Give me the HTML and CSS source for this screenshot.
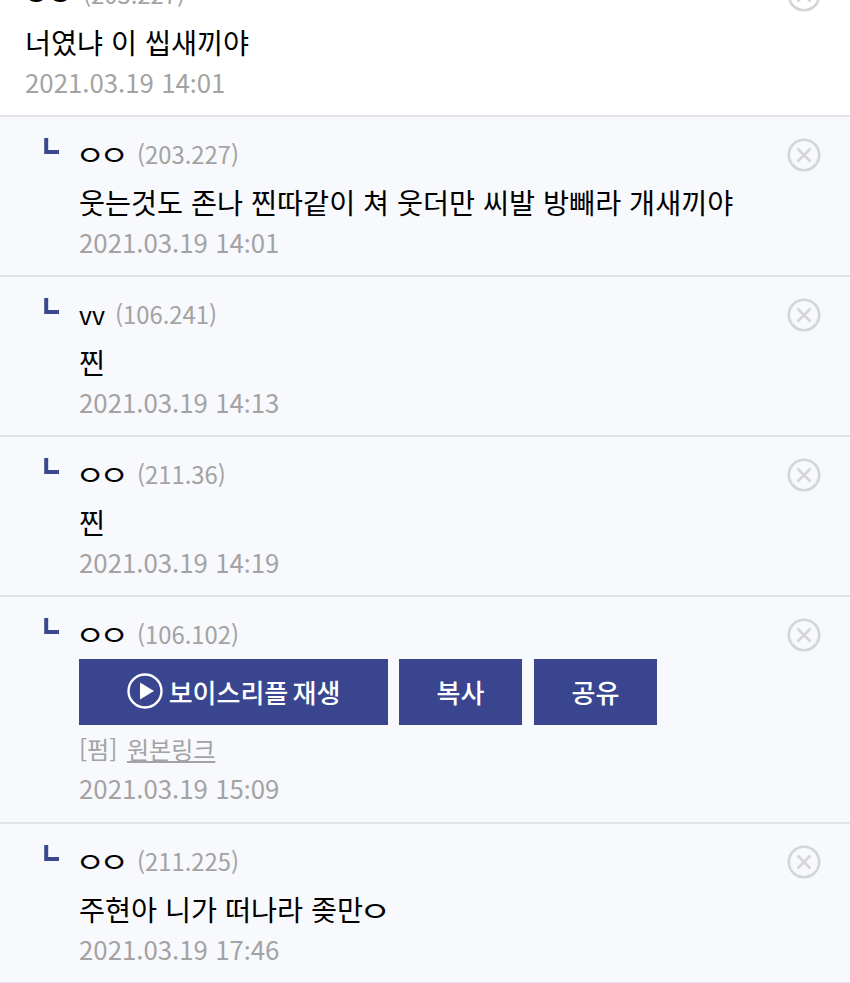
FILE: index.html
```html
<!DOCTYPE html>
<html lang="ko">
<head>
    <meta charset="UTF-8">
    <meta name="viewport" content="width=device-width, initial-scale=1.0">
    <title>댓글</title>
    <link rel="stylesheet" href="styles.css">
</head>
<body>
    <svg class="icon-defs" width="0" height="0">
        <symbol id="close" viewBox="0 0 34 34">
            <circle cx="17" cy="17" r="15.2" fill="none" stroke="#d3d5d8" stroke-width="2.6"/>
            <path d="M10.5 10.5L23.5 23.5M23.5 10.5L10.5 23.5" fill="none" stroke="#d3d5d8" stroke-width="2.6"/>
        </symbol>
        <symbol id="reply" viewBox="0 0 15 16">
            <path d="M2.2 0V14H15" fill="none" stroke="#3b478f" stroke-width="4"/>
        </symbol>
    </svg>

    <div class="comment first">
        <div class="head"><span class="name jamo">ㅇㅇ</span><span class="ip">(203.227)</span></div>
        <p class="text">너였냐 이 씹새끼야</p>
        <p class="date">2021.03.19 14<span class="colon">:</span>01</p>
        <svg class="close"><use href="#close"/></svg>
    </div>

    <div class="comment reply">
        <svg class="mark"><use href="#reply"/></svg>
        <div class="head"><span class="name jamo">ㅇㅇ</span><span class="ip">(203.227)</span></div>
        <p class="text">웃는것도 존나 찐따같이 쳐 웃더만 씨발 방빼라 개새끼야</p>
        <p class="date">2021.03.19 14<span class="colon">:</span>01</p>
        <svg class="close"><use href="#close"/></svg>
    </div>

    <div class="comment reply">
        <svg class="mark"><use href="#reply"/></svg>
        <div class="head"><span class="name">vv</span><span class="ip">(106.241)</span></div>
        <p class="text">찐</p>
        <p class="date">2021.03.19 14<span class="colon">:</span>13</p>
        <svg class="close"><use href="#close"/></svg>
    </div>

    <div class="comment reply">
        <svg class="mark"><use href="#reply"/></svg>
        <div class="head"><span class="name jamo">ㅇㅇ</span><span class="ip">(211.36)</span></div>
        <p class="text">찐</p>
        <p class="date">2021.03.19 14<span class="colon">:</span>19</p>
        <svg class="close"><use href="#close"/></svg>
    </div>

    <div class="comment reply voice">
        <svg class="mark"><use href="#reply"/></svg>
        <div class="head"><span class="name jamo">ㅇㅇ</span><span class="ip">(106.102)</span></div>
        <div class="voice-btns">
            <button class="btn btn-play" type="button">
                <svg class="play" viewBox="0 0 36 36">
                    <circle cx="18" cy="18" r="16.5" fill="none" stroke="#fff" stroke-width="2.4"/>
                    <path d="M13 9.5V26.5L27 18Z" fill="#fff"/>
                </svg>
                보이스리플 재생
            </button>
            <button class="btn" type="button">복사</button>
            <button class="btn" type="button">공유</button>
        </div>
        <p class="source">[펌] <a href="#">원본링크</a></p>
        <p class="date">2021.03.19 15<span class="colon">:</span>09</p>
        <svg class="close"><use href="#close"/></svg>
    </div>

    <div class="comment reply">
        <svg class="mark"><use href="#reply"/></svg>
        <div class="head"><span class="name jamo">ㅇㅇ</span><span class="ip">(211.225)</span></div>
        <p class="text">주현아 니가 떠나라 좆만<span class="jamo-end">ㅇ</span></p>
        <p class="date">2021.03.19 17<span class="colon">:</span>46</p>
        <svg class="close"><use href="#close"/></svg>
    </div>
</body>
</html>
```

FILE: styles.css
```css
html, body {
    height: 983px;
    overflow: hidden;
}
body {
    margin: 0;
    background-color: #fff;
    color: #000;
    font-family: "Noto Sans CJK KR", "Noto Sans", sans-serif;
}
p {
    margin: 0;
}
.icon-defs {
    display: block;
}
.comment {
    position: relative;
    box-sizing: border-box;
    padding: 18px 0 22px 25px;
    border-bottom: 2px solid #e1e3ea;
}
.comment.first {
    margin-top: -43px;
}
.comment.reply {
    padding-left: 79px;
    background-color: #f8f9fc;
}
.comment.voice {
    padding-bottom: 23px;
}
.head {
    display: flex;
    gap: 10px;
    height: 38px;
    line-height: 38px;
}
.name {
    font-size: 25px;
}
/* the jamo are much wider in the reference font */
.jamo {
    width: 48px;
    font-size: 27px;
    letter-spacing: -4.8px;
    transform: translateX(-3.7px) scaleX(1.2);
    transform-origin: left center;
}
.jamo-end {
    display: inline-block;
    font-size: 27px;
    transform: translateX(-4px) scaleX(1.3);
    transform-origin: left center;
}
.ip {
    font-size: 23.8px;
    color: #a3a3a3;
}
.text {
    height: 58px;
    line-height: 58px;
    font-size: 28.3px;
}
.date {
    height: 22px;
    line-height: 22px;
    font-size: 25.8px;
    color: #a3a3a3;
}
.colon {
    font-family: "Noto Sans", sans-serif;
}
.mark {
    position: absolute;
    left: 44px;
    top: 21px;
    width: 15px;
    height: 16px;
}
.close {
    position: absolute;
    right: 29px;
    top: 21px;
    width: 34px;
    height: 34px;
}
.voice-btns {
    display: flex;
    gap: 11px;
    margin-top: 6px;
}
.btn {
    display: flex;
    align-items: center;
    justify-content: center;
    gap: 6px;
    width: 123px;
    height: 66px;
    padding: 0 0 2px;
    border: 0;
    background-color: #39468f;
    color: #fff;
    font-family: inherit;
    font-size: 26px;
    font-weight: 500;
    word-spacing: -3px;
}
.btn:last-child {
    margin-left: 1px;
}
.btn-play {
    width: 309px;
}
.play {
    width: 36px;
    height: 36px;
}
.source {
    height: 52px;
    line-height: 48px;
    font-size: 24px;
    color: #a3a3a3;
}
.source a {
    margin-left: 3px;
    color: #a3a3a3;
}
```
